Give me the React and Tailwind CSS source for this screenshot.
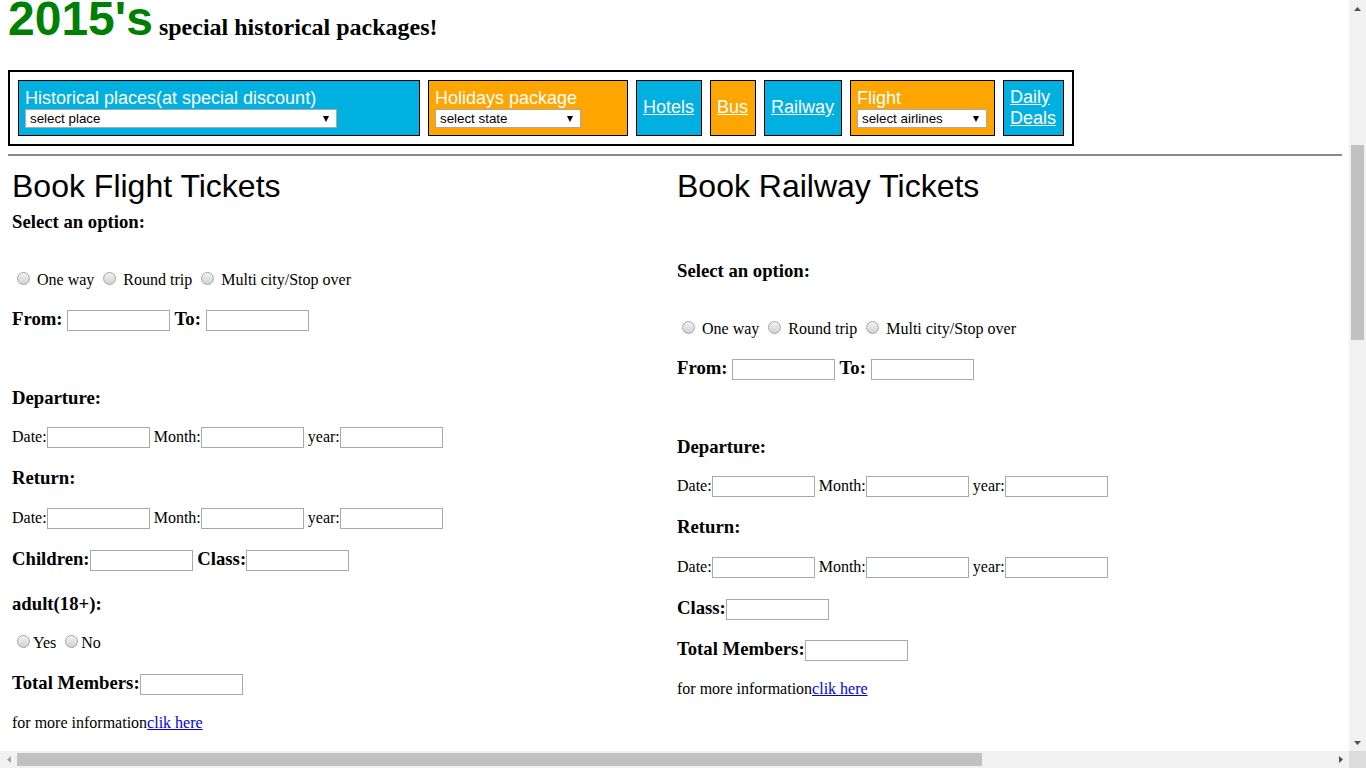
import React from "react";

function Radio() {
  return (
    <span className="inline-block align-baseline w-[13px] h-[13px] ml-[5px] mr-[3px] rounded-full border border-[#a6a6a6] bg-linear-to-b from-[#f2f2f2] to-[#d2d2d2]" />
  );
}

function Box() {
  return (
    <input
      type="text"
      className="block shrink-0 w-[103px] h-[21px] border border-[#a9a9a9] bg-white"
    />
  );
}

function B({ children }) {
  return (
    <span className="text-[18.72px] font-bold leading-[17px] whitespace-pre">{children}</span>
  );
}

function T({ children }) {
  return <span className="text-[16px] leading-[19px] whitespace-pre">{children}</span>;
}

function H3({ className = "", children }) {
  return (
    <div className={"h-[22px] leading-[22px] text-[18.72px] font-bold " + className}>{children}</div>
  );
}

function Row({ className = "", children }) {
  return <div className={"flex items-start h-[21px] " + className}>{children}</div>;
}

function DateRow({ className = "" }) {
  return (
    <Row className={className}>
      <T>Date:</T>
      <Box />
      <T>{" Month:"}</T>
      <Box />
      <T>{" year:"}</T>
      <Box />
    </Row>
  );
}

function Form({ railway }) {
  return (
    <div className={railway ? "mt-[53px]" : "mt-[4px]"}>
      <H3>Select an option:</H3>
      <div className="mt-[37px] h-[19px] leading-[19px] text-[16px]">
        <Radio />
        {" One way "}
        <Radio />
        {" Round trip "}
        <Radio />
        {" Multi city/Stop over"}
      </div>
      <Row className="mt-[21px]">
        <B>{"From: "}</B>
        <Box />
        <B>{" To: "}</B>
        <Box />
      </Row>
      <H3 className="mt-[56px]">Departure:</H3>
      <DateRow className="mt-[18px]" />
      <H3 className="mt-[19px]">Return:</H3>
      <DateRow className="mt-[19px]" />
      {railway ? (
        <>
          <Row className="mt-[21px]">
            <B>Class:</B>
            <Box />
          </Row>
          <Row className="mt-[20px]">
            <B>Total Members:</B>
            <Box />
          </Row>
        </>
      ) : (
        <>
          <Row className="mt-[21px]">
            <B>Children:</B>
            <Box />
            <B>{" Class:"}</B>
            <Box />
          </Row>
          <H3 className="mt-[22px]">adult(18+):</H3>
          <div className="mt-[18px] h-[19px] leading-[19px] text-[16px]">
            <Radio />
            {"Yes "}
            <Radio />
            {"No"}
          </div>
          <Row className="mt-[22px]">
            <B>Total Members:</B>
            <Box />
          </Row>
        </>
      )}
      <div className="mt-[18px] h-[19px] leading-[19px] text-[16px]">
        for more information
        <a href="#" className="text-[#0000ee] underline">
          clik here
        </a>
      </div>
    </div>
  );
}

function Select({ width, label }) {
  return (
    <div
      className={
        "flex items-center justify-between h-[19px] bg-white border border-[#a9a9a9] pl-[4px] pr-[7px] text-[13.33px] leading-[15px] text-black " +
        width
      }
    >
      <span>{label}</span>
      <svg width="6" height="6" viewBox="0 0 6 6">
        <polygon points="0,0 6,0 3,6" fill="#000" />
      </svg>
    </div>
  );
}

function DropCell({ width, color, title, selectWidth, selectLabel }) {
  return (
    <div
      className={
        "flex flex-col justify-center h-[56px] border border-black px-[6px] text-white " + width + " " + color
      }
    >
      <div className="text-[18px] leading-[21px] whitespace-nowrap">{title}</div>
      <Select width={selectWidth} label={selectLabel} />
    </div>
  );
}

function LinkCell({ width, color, children }) {
  return (
    <div
      className={"flex items-center h-[56px] border border-black px-[6px] pb-[1px] text-white " + width + " " + color}
    >
      <a href="#" className="text-[18px] leading-[21px] underline">
        {children}
      </a>
    </div>
  );
}

function Nav() {
  return (
    <div className="mt-[34px] w-[1066px] border-2 border-black p-[8px] flex gap-[8px] font-['Liberation_Sans',Arial,sans-serif]">
      <DropCell
        width="w-[402px]"
        color="bg-[#00b0e0]"
        title="Historical places(at special discount)"
        selectWidth="w-[312px]"
        selectLabel="select place"
      />
      <DropCell
        width="w-[200px]"
        color="bg-[#ffa500]"
        title="Holidays package"
        selectWidth="w-[146px]"
        selectLabel="select state"
      />
      <LinkCell width="w-[66px]" color="bg-[#00b0e0]">Hotels</LinkCell>
      <LinkCell width="w-[46px]" color="bg-[#ffa500]">Bus</LinkCell>
      <LinkCell width="w-[78px]" color="bg-[#00b0e0]">Railway</LinkCell>
      <DropCell
        width="w-[145px]"
        color="bg-[#ffa500]"
        title="Flight"
        selectWidth="w-[130px]"
        selectLabel="select airlines"
      />
      <LinkCell width="w-[61px]" color="bg-[#00b0e0]">Daily Deals</LinkCell>
    </div>
  );
}

function VScroll() {
  return (
    <div className="w-[17px] shrink-0 bg-[#f1f1f1] flex flex-col">
      <div className="h-[17px] flex items-center justify-center">
        <svg width="7" height="4" viewBox="0 0 7 4">
          <polygon points="0,4 3.5,0 7,4" fill="#505050" />
        </svg>
      </div>
      <div className="flex-1 flex flex-col items-center">
        <div className="mt-[128px] w-[13px] h-[195px] bg-[#c1c1c1]" />
      </div>
      <div className="h-[17px] flex items-center justify-center">
        <svg width="7" height="4" viewBox="0 0 7 4">
          <polygon points="0,0 7,0 3.5,4" fill="#505050" />
        </svg>
      </div>
    </div>
  );
}

function HScroll() {
  return (
    <div className="h-[17px] shrink-0 flex">
      <div className="flex-1 bg-[#f1f1f1] flex">
        <div className="w-[17px] flex items-center justify-center">
          <svg width="4" height="7" viewBox="0 0 4 7">
            <polygon points="4,0 4,7 0,3.5" fill="#a3a3a3" />
          </svg>
        </div>
        <div className="flex-1 flex items-center">
          <div className="w-[965px] h-[13px] bg-[#c1c1c1]" />
        </div>
        <div className="w-[17px] flex items-center justify-center">
          <svg width="4" height="7" viewBox="0 0 4 7">
            <polygon points="0,0 0,7 4,3.5" fill="#505050" />
          </svg>
        </div>
      </div>
      <div className="w-[17px] bg-[#dcdcdc]" />
    </div>
  );
}

export default function App() {
  return (
    <div className="w-[1366px] h-[768px] overflow-hidden flex flex-col bg-white text-black font-['Liberation_Serif','Times_New_Roman',serif]">
      <div className="flex flex-1 min-h-0">
        <main className="flex-1 min-w-0 overflow-hidden px-[8px]">
          <div className="h-[36px] leading-[38px] whitespace-nowrap">
            <span className="text-[48px] font-bold text-[#008000] font-['Liberation_Sans',Arial,sans-serif]">
              2015's
            </span>
            <span className="text-[24px] font-bold">{" special historical packages!"}</span>
          </div>
          <Nav />
          <div className="mt-[8px] mr-[-1px] h-[2px] bg-[#888888]" />
          <div className="mt-[14px] flex">
            <div className="w-[665px] pl-[4px]">
              <div className="h-[37px] leading-[33px] text-[32px] font-['Liberation_Sans',Arial,sans-serif]">
                Book Flight Tickets
              </div>
              <Form />
            </div>
            <div className="w-[665px] pl-[4px]">
              <div className="h-[37px] leading-[33px] text-[32px] font-['Liberation_Sans',Arial,sans-serif]">
                Book Railway Tickets
              </div>
              <Form railway />
            </div>
          </div>
        </main>
        <VScroll />
      </div>
      <HScroll />
    </div>
  );
}
